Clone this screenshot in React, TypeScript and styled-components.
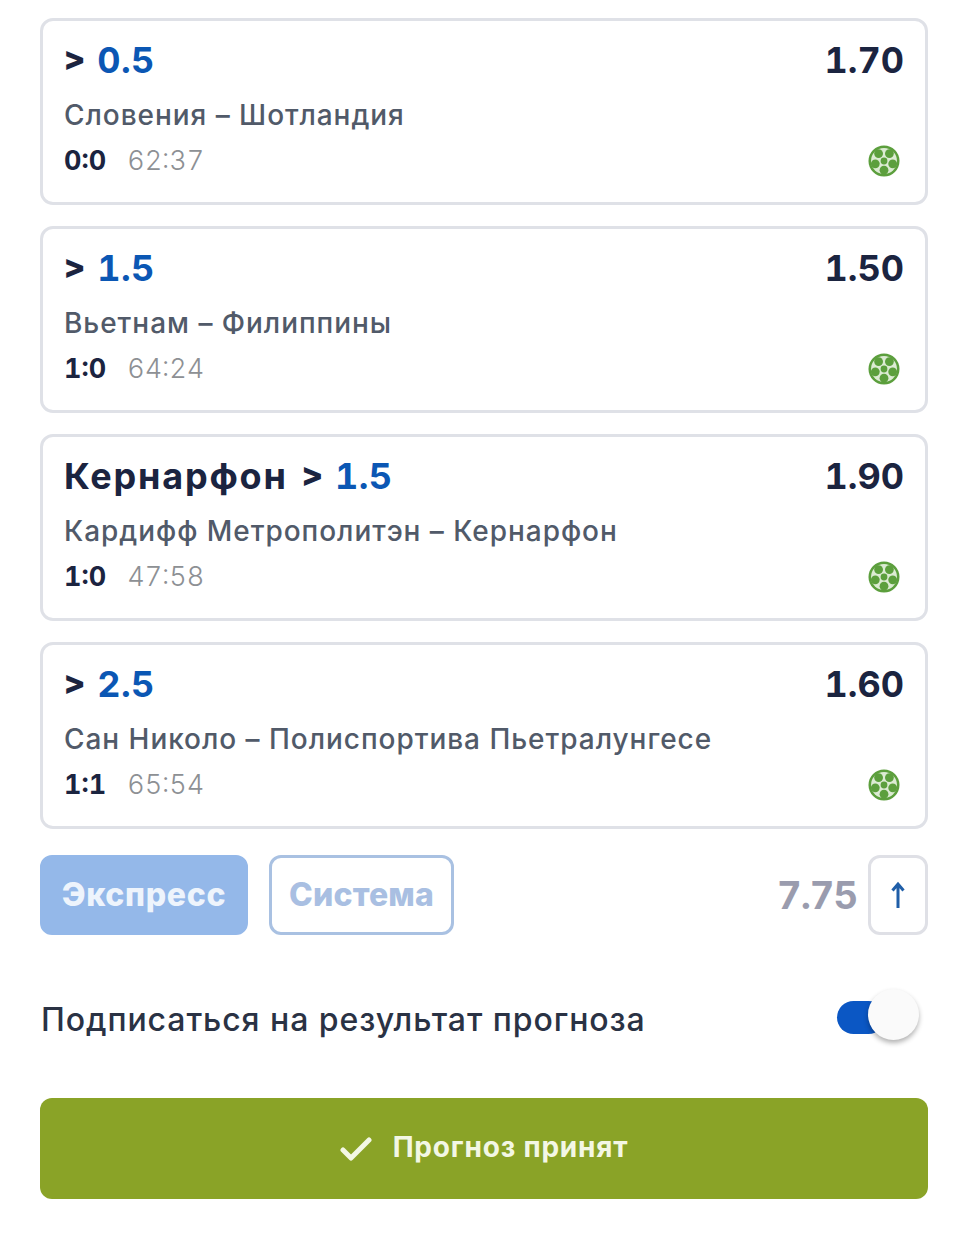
import React from "react";
import styled, { createGlobalStyle } from "styled-components";

const Global = createGlobalStyle`
  html, body { margin: 0; padding: 0; background: #fff; }
  body {
    font-family: Inter, "Noto Sans", "Liberation Sans", sans-serif;
    font-feature-settings: "tnum" 1;
  }
`;

const Page = styled.main`
  width: 968px;
  height: 1236px;
  box-sizing: border-box;
  padding: 18px 40px 0;
  display: flex;
  flex-direction: column;
`;

const BetList = styled.section`
  display: flex;
  flex-direction: column;
  gap: 21px;
`;

const Card = styled.article`
  height: 187px;
  box-sizing: border-box;
  border: 3px solid #dfe1e7;
  border-radius: 13px;
  padding: 16px 21px 0 21px;
  display: flex;
  flex-direction: column;
`;

const HeadRow = styled.div`
  display: flex;
  justify-content: space-between;
  align-items: center;
  height: 46px;
`;

const Market = styled.div`
  font-size: 36px;
  font-weight: 700;
  color: #1b2440;
  display: flex;
  gap: 12px;
  align-items: center;
`;

const Team = styled.span`
  letter-spacing: 1.8px;
  margin-right: 2px;
`;

const Comparison = styled.span`
  font-size: 33px;
  font-weight: 800;
  margin-top: -4px;
`;

const Line = styled.span`
  color: #0b57b4;
  letter-spacing: 0.4px;
`;

const Odds = styled.div`
  font-size: 36px;
  font-weight: 700;
  color: #1b2440;
`;

const Teams = styled.div`
  margin-top: 16px;
  height: 32px;
  line-height: 32px;
  font-size: 28px;
  font-weight: 500;
  letter-spacing: 0.95px;
  color: #515a69;
`;

const FootRow = styled.div`
  margin-top: 11px;
  display: flex;
  justify-content: space-between;
  align-items: center;
  height: 36px;
`;

const Live = styled.div`
  display: flex;
  align-items: center;
  gap: 21px;
`;

const Score = styled.span`
  font-size: 27px;
  font-weight: 700;
  color: #1b2440;
`;

const Clock = styled.span`
  font-size: 27px;
  font-weight: 300;
  color: #8d9094;
`;

const BallIcon = styled.svg`
  width: 32px;
  height: 32px;
  margin: 1px 4px 0 0;
  display: block;
`;

const SummaryRow = styled.div`
  margin-top: 26px;
  display: flex;
  align-items: stretch;
  height: 80px;
`;

const Kind = styled.button<{ $active?: boolean }>`
  box-sizing: border-box;
  width: ${(p) => (p.$active ? "208px" : "185px")};
  margin-right: 21px;
  border-radius: 12px;
  border: 3px solid ${(p) => (p.$active ? "#94b8e9" : "#a9c1e2")};
  background: ${(p) => (p.$active ? "#94b8e9" : "#fff")};
  color: ${(p) => (p.$active ? "#eef4fc" : "#a9bfe2")};
  font-family: inherit;
  font-size: 32px;
  font-weight: 800;
  letter-spacing: ${(p) => (p.$active ? "0.7px" : "0.2px")};
  padding: 0 0 2px;
`;

const Total = styled.div`
  margin-left: auto;
  margin-right: 11px;
  align-self: center;
  font-size: 38px;
  font-weight: 700;
  letter-spacing: -1px;
  color: #9a9cae;
`;

const SortBox = styled.button`
  width: 60px;
  box-sizing: border-box;
  border: 3px solid #dfe0e6;
  border-radius: 12px;
  background: #fff;
  display: flex;
  align-items: center;
  justify-content: center;
  padding: 0 1px 0 0;
`;

const SubscribeRow = styled.div`
  margin-top: 50px;
  height: 70px;
  display: flex;
  justify-content: space-between;
  align-items: center;
`;

const SubscribeLabel = styled.span`
  font-size: 32px;
  font-weight: 500;
  letter-spacing: 0.92px;
  color: #2a3244;
  margin-bottom: 2px;
  padding-left: 1px;
`;

const Toggle = styled.div`
  position: relative;
  width: 48px;
  height: 33px;
  margin-right: 43px;
  margin-top: -6px;
  border-radius: 17px;
  background: #0b57c4;
`;

const Knob = styled.div`
  position: absolute;
  left: 31px;
  top: -12px;
  width: 51px;
  height: 51px;
  border-radius: 50%;
  background: #fafafa;
  box-shadow: 0 3px 5px rgba(0, 0, 0, 0.3);
`;

const Submit = styled.button`
  margin-top: 43px;
  height: 101px;
  border: none;
  border-radius: 12px;
  background: #8aa327;
  color: #f3f7e4;
  font-family: inherit;
  font-size: 28px;
  font-weight: 700;
  letter-spacing: 0.8px;
  display: flex;
  align-items: center;
  justify-content: center;
  gap: 21px;
  padding: 0 0 3px;
`;

const Check = styled.svg`
  width: 32px;
  height: 24px;
  margin-top: 4px;
`;

// Panels of the ball sit between the seams, with one more at the centre.
const ballPanels = [
  [21.4, 8.6],
  [24.7, 18.8],
  [16, 25.2],
  [7.3, 18.8],
  [10.6, 8.6],
];

const SoccerBall = () => (
  <BallIcon viewBox="0 0 32 32">
    <circle cx="16" cy="16" r="15.5" fill="#5c9f3d" />
    <circle cx="16" cy="16" r="13" fill="#dcebd3" />
    {ballPanels.map(([cx, cy]) => (
      <circle key={`${cx}-${cy}`} cx={cx} cy={cy} r="4.4" fill="#5c9f3d" />
    ))}
    <circle cx="16" cy="16" r="3.4" fill="#5c9f3d" />
  </BallIcon>
);

const bets = [
  { team: "", line: "0.5", odds: "1.70", teams: "Словения – Шотландия", score: "0:0", clock: "62:37" },
  { team: "", line: "1.5", odds: "1.50", teams: "Вьетнам – Филиппины", score: "1:0", clock: "64:24" },
  { team: "Кернарфон", line: "1.5", odds: "1.90", teams: "Кардифф Метрополитэн – Кернарфон", score: "1:0", clock: "47:58" },
  { team: "", line: "2.5", odds: "1.60", teams: "Сан Николо – Полиспортива Пьетралунгесе", score: "1:1", clock: "65:54" },
];

export default function App() {
  return (
    <Page>
      <Global />
      <BetList>
        {bets.map((b) => (
          <Card key={b.teams}>
            <HeadRow>
              <Market>
                {b.team && <Team>{b.team}</Team>}
                <Comparison>&gt;</Comparison>
                <Line>{b.line}</Line>
              </Market>
              <Odds>{b.odds}</Odds>
            </HeadRow>
            <Teams>{b.teams}</Teams>
            <FootRow>
              <Live>
                <Score>{b.score}</Score>
                <Clock>{b.clock}</Clock>
              </Live>
              <SoccerBall />
            </FootRow>
          </Card>
        ))}
      </BetList>
      <SummaryRow>
        <Kind $active>Экспресс</Kind>
        <Kind>Система</Kind>
        <Total>7.75</Total>
        <SortBox>
          <svg width="16" height="28" viewBox="0 0 16 28" fill="none" stroke="#1f5ea8" strokeWidth="3">
            <path d="M8 27V3M2.5 9.5L8 3l5.5 6.5" />
          </svg>
        </SortBox>
      </SummaryRow>
      <SubscribeRow>
        <SubscribeLabel>Подписаться на результат прогноза</SubscribeLabel>
        <Toggle>
          <Knob />
        </Toggle>
      </SubscribeRow>
      <Submit>
        <Check viewBox="0 0 32 24" fill="none" stroke="#f3f7e4" strokeWidth="5" strokeLinecap="round" strokeLinejoin="round">
          <path d="M3 13l8 8L29 3" />
        </Check>
        Прогноз принят
      </Submit>
    </Page>
  );
}
